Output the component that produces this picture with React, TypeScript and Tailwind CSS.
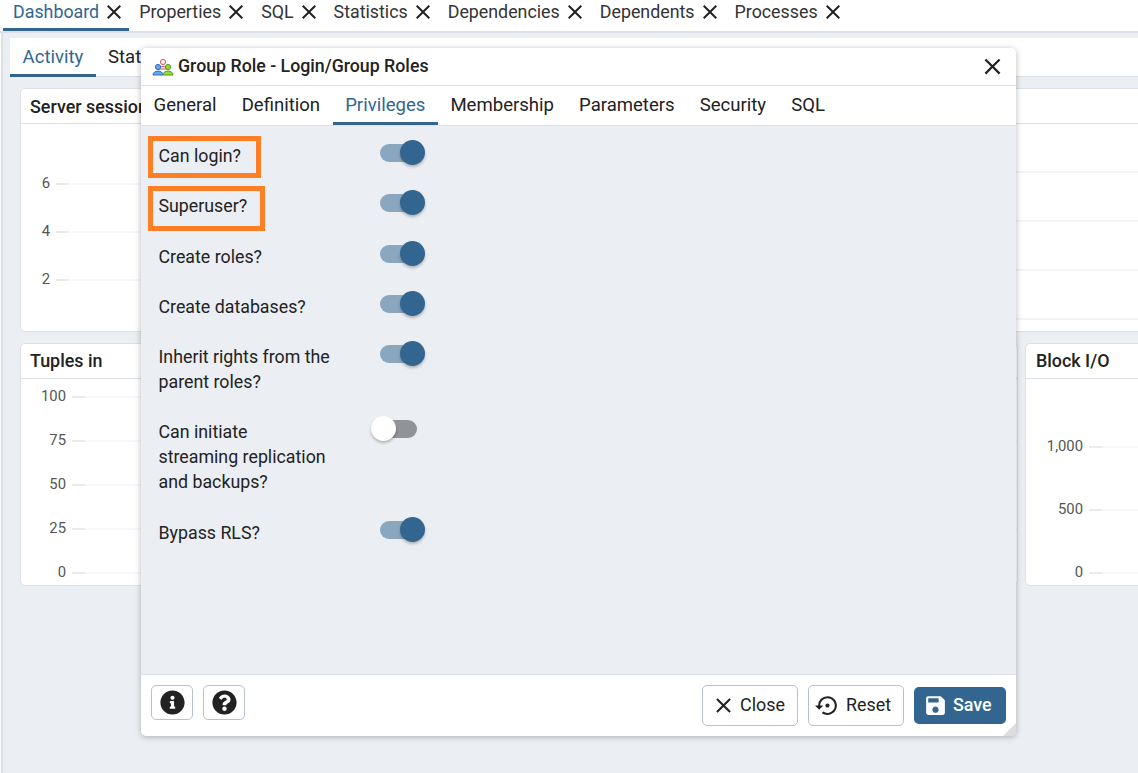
import { FaInfoCircle, FaQuestionCircle } from "react-icons/fa";
import { MdClose, MdSave, MdSettingsBackupRestore } from "react-icons/md";

const topTabs = ["Dashboard", "Properties", "SQL", "Statistics", "Dependencies", "Dependents", "Processes"];
const dialogTabs = ["General", "Definition", "Privileges", "Membership", "Parameters", "Security", "SQL"];

type Tick = { label: string; y: number };

function Axis({ ticks, labelRight, x1, x2 }: { ticks: Tick[]; labelRight: number; x1: number; x2: number }) {
  return (
    <>
      {ticks.map((t) => (
        <g key={t.label}>
          <line x1={x1} x2={x2} y1={t.y} y2={t.y} stroke="#eef0f3" strokeWidth="1" />
          <line x1={x1} x2={x1 + 13} y1={t.y} y2={t.y} stroke="#ebebeb" strokeWidth="2" />
          <text x={labelRight} y={t.y + 4} textAnchor="end" fontSize="14.8" fill="#555555" fontFamily="Roboto, sans-serif">
            {t.label}
          </text>
        </g>
      ))}
    </>
  );
}

function Toggle({ on }: { on: boolean }) {
  return (
    <div className="relative -mt-[3px] h-[25px] w-[54px] shrink-0">
      <div className={`absolute left-[9px] top-[4px] h-[18px] w-[37px] rounded-full ${on ? "bg-[#8ba7c0]" : "bg-[#929396]"}`} />
      <div
        className={`absolute top-0 h-[25px] w-[25px] rounded-full shadow-[0_2px_3px_rgba(0,0,0,0.25)] ${on ? "left-[29px] bg-[#326690]" : "left-0 bg-white"}`}
      />
    </div>
  );
}

function Row({ lines, on, box }: { lines: string[]; on: boolean; box?: string }) {
  return (
    <div className="flex">
      <div className="relative w-[212.5px] shrink-0 text-[17.8px] leading-[25px] text-[#222222]">
        {lines.map((l) => (
          <div key={l}>{l}</div>
        ))}
        {box && <div className={`absolute border-[5px] border-[#ff7f27] ${box}`} />}
      </div>
      <Toggle on={on} />
    </div>
  );
}

function GroupIcon() {
  return (
    <svg width="22" height="18" viewBox="0 0 22 18" className="shrink-0">
      <g fill="#fdf0f0" stroke="#cf5b5a" strokeWidth="1">
        <circle cx="11" cy="4" r="2.6" />
        <path d="M6.8 11 C6.8 7.6 15.2 7.6 15.2 11 Z" />
      </g>
      <g fill="#6aa6e6" stroke="#2f6fc0" strokeWidth="1">
        <circle cx="6" cy="9" r="2.6" />
        <path d="M1 17 C1 11.8 11 11.8 11 17 Z" />
      </g>
      <g fill="#9ad83a" stroke="#4f9a1a" strokeWidth="1">
        <circle cx="16" cy="9" r="2.6" />
        <path d="M11 17 C11 11.8 21 11.8 21 17 Z" />
      </g>
    </svg>
  );
}

export default function App() {
  return (
    <div className="relative flex h-[773px] w-[1138px] flex-col overflow-hidden bg-white font-['Roboto',sans-serif] text-[17.9px] text-[#222222]">
      <div className="flex h-[33px] shrink-0 border-b-2 border-[#dde0e6] bg-white pl-[3px] text-[17.82px]">
        {topTabs.map((t, i) => (
          <div
            key={t}
            className={`flex h-[31px] items-center border-b-[3px] pb-[4px] pl-[10px] pr-[5px] ${i === 0 ? "border-[#326690] text-[#326690]" : "border-transparent text-[#333333]"}`}
          >
            <span className="whitespace-nowrap">{t}</span>
            <span className="ml-[5px] flex w-[20px] justify-center text-[#222222]">
              <MdClose size={24} className="shrink-0" />
            </span>
          </div>
        ))}
      </div>

      <div className="ml-[1px] flex min-h-0 flex-1 border-l-2 border-[#dde0e6] bg-[#ebeef3] pl-[7px] pt-[5px]">
        <div className="flex w-[1140px] shrink-0 flex-col">
          <div className="flex h-[39px] shrink-0 bg-white text-[18.57px] shadow-[inset_0_-1px_0_#dde0e6]">
            <div className="flex w-[86px] items-center justify-center border-y-[3px] border-t-transparent border-b-[#326690] text-[#326690]">
              Activity
            </div>
            <div className="flex items-center pl-[12px]">Statistics</div>
          </div>
          <div className="flex flex-col gap-[11px] pl-[11px] pt-[11px]">
            <div className="-ml-[1px] h-[244px] w-[1140px] overflow-hidden rounded-[5px] border border-[#dde0e6] bg-white">
              <div className="flex h-[35px] items-center border-b border-[#dde0e6] pl-[9px] pt-[3px] font-medium">Server sessions</div>
              <svg width="1118" height="208" className="block">
                <Axis
                  ticks={[
                    { label: "6", y: 60 },
                    { label: "4", y: 108 },
                    { label: "2", y: 156 },
                  ]}
                  labelRight={29}
                  x1={35}
                  x2={125}
                />
                {[48, 97, 146, 195].map((y) => (
                  <line key={y} x1="990" x2="1118" y1={y} y2={y} stroke="#e8e9ee" strokeWidth="1" />
                ))}
              </svg>
            </div>
            <div className="-ml-[1px] flex gap-[7px]">
              <div className="h-[243px] w-[998px] shrink-0 overflow-hidden rounded-[5px] border border-[#dde0e6] bg-white">
                <div className="flex h-[35px] items-center border-b border-[#dde0e6] pl-[9px] font-medium">Tuples in</div>
                <svg width="996" height="206" className="block">
                  <Axis
                    ticks={[
                      { label: "100", y: 18 },
                      { label: "75", y: 62 },
                      { label: "50", y: 106 },
                      { label: "25", y: 150 },
                      { label: "0", y: 194 },
                    ]}
                    labelRight={45}
                    x1={51}
                    x2={996}
                  />
                </svg>
              </div>
              <div className="h-[243px] w-[200px] shrink-0 overflow-hidden rounded-[5px] border border-[#dde0e6] bg-white">
                <div className="flex h-[35px] items-center border-b border-[#dde0e6] pl-[10px] font-medium">Block I/O</div>
                <svg width="198" height="206" className="block">
                  <Axis
                    ticks={[
                      { label: "1,000", y: 68 },
                      { label: "500", y: 131 },
                      { label: "0", y: 194 },
                    ]}
                    labelRight={57}
                    x1={63}
                    x2={198}
                  />
                </svg>
              </div>
            </div>
          </div>
        </div>
      </div>

      <div className="absolute left-[141px] top-[48px] flex h-[688px] w-[875px] flex-col overflow-hidden rounded-[5px] bg-white shadow-[0_1px_6px_rgba(0,0,0,0.28)]">
        <div className="flex h-[38px] shrink-0 items-center gap-[4px] border-b border-[#dde0e6] pl-[11px] pr-[10px]">
          <GroupIcon />
          <span className="flex-1 text-[17.75px] font-medium">Group Role - Login/Group Roles</span>
          <MdClose size={27} className="text-[#222222]" />
        </div>
        <div className="flex h-[40px] shrink-0 border-b border-[#dde0e6] text-[18.57px]">
          {dialogTabs.map((t) => (
            <div
              key={t}
              className={`flex items-center border-y-[3px] border-t-transparent px-[12.5px] ${t === "Privileges" ? "border-b-[#326690] text-[#326690]" : "border-b-transparent"}`}
            >
              {t}
            </div>
          ))}
        </div>
        <div className="flex min-h-0 flex-1 flex-col gap-[25.25px] bg-[#ebeef3] pl-[17.5px] pt-[17px]">
          <Row lines={["Can login?"]} on box="-left-[10.5px] -top-[7px] h-[42px] w-[113px]" />
          <Row lines={["Superuser?"]} on box="-left-[10.5px] -top-[7px] h-[45px] w-[117px]" />
          <Row lines={["Create roles?"]} on />
          <Row lines={["Create databases?"]} on />
          <Row lines={["Inherit rights from the", "parent roles?"]} on />
          <Row lines={["Can initiate", "streaming replication", "and backups?"]} on={false} />
          <Row lines={["Bypass RLS?"]} on />
        </div>
        <div className="relative flex h-[62px] shrink-0 items-start border-t border-[#dde0e6] pl-[10px] pr-[10px] pt-[10px]">
          <div className="flex gap-[10px]">
            <div className="flex h-[35px] w-[42px] items-center justify-center rounded-[5px] border border-[#bac1cd]">
              <FaInfoCircle size={25} color="#222222" />
            </div>
            <div className="flex h-[35px] w-[42px] items-center justify-center rounded-[5px] border border-[#bac1cd]">
              <FaQuestionCircle size={25} color="#222222" />
            </div>
          </div>
          <div className="ml-auto flex items-center gap-[10px]">
            <div className="flex h-[41px] w-[96px] items-center gap-[4px] rounded-[5px] border border-[#bac1cd] pl-[8px]">
              <MdClose size={25} />
              <span>Close</span>
            </div>
            <div className="flex h-[41px] w-[96px] items-center gap-[6px] rounded-[5px] border border-[#bac1cd] pl-[6px]">
              <MdSettingsBackupRestore size={25} />
              <span>Reset</span>
            </div>
            <div className="flex h-[37px] w-[92px] items-center gap-[5px] rounded-[5px] bg-[#326690] pl-[9px] font-medium text-white">
              <MdSave size={25} />
              <span>Save</span>
            </div>
          </div>
          <div className="absolute bottom-0 right-0 h-0 w-0 border-b-[13px] border-l-[13px] border-b-[#dddddd] border-l-transparent" />
        </div>
      </div>
    </div>
  );
}
